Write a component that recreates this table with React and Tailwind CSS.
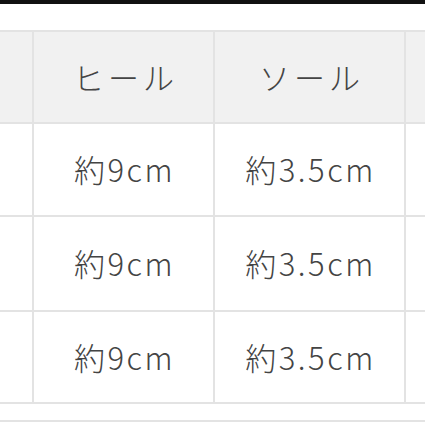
const rows = [
  { heel: "約9cm", sole: "約3.5cm", h: "h-[93px]" },
  { heel: "約9cm", sole: "約3.5cm", h: "h-[95px]" },
  { heel: "約9cm", sole: "約3.5cm", h: "h-[92px]" },
];

const cell = "flex items-center justify-center border-r-2 border-[#e3e3e3]";

export default function App() {
  return (
    <div
      className="w-[425px] h-[425px] overflow-hidden bg-white text-[#444] font-light"
      style={{ fontFamily: '"Noto Sans CJK JP", "Noto Sans", sans-serif' }}
    >
      <div className="h-[4px] bg-[#111]" />
      <div className="h-[26px]" />

      {/* header */}
      <div className="flex h-[94px] border-t-2 border-b-2 border-[#e3e3e3] bg-[#f1f1f1]">
        <div className={`${cell} w-[34px]`} />
        <div className={`${cell} w-[181px] text-[31px] tracking-[4px] pl-[4px]`}>ヒール</div>
        <div className={`${cell} w-[191px] text-[31px] tracking-[4px] pl-[4px]`}>ソール</div>
        <div className="flex-1" />
      </div>

      {/* body */}
      {rows.map((r, i) => (
        <div key={i} className={`flex ${r.h} border-b-2 border-[#e3e3e3]`}>
          <div className={`${cell} w-[34px]`} />
          <div className={`${cell} w-[181px] text-[31px] tracking-[2.5px] pl-[2px]`}>{r.heel}</div>
          <div className={`${cell} w-[191px] text-[31px] tracking-[2.5px] pl-[2px]`}>{r.sole}</div>
          <div className="flex-1" />
        </div>
      ))}

      <div className="h-[18px] border-b-2 border-[#e3e3e3]" />
    </div>
  );
}
